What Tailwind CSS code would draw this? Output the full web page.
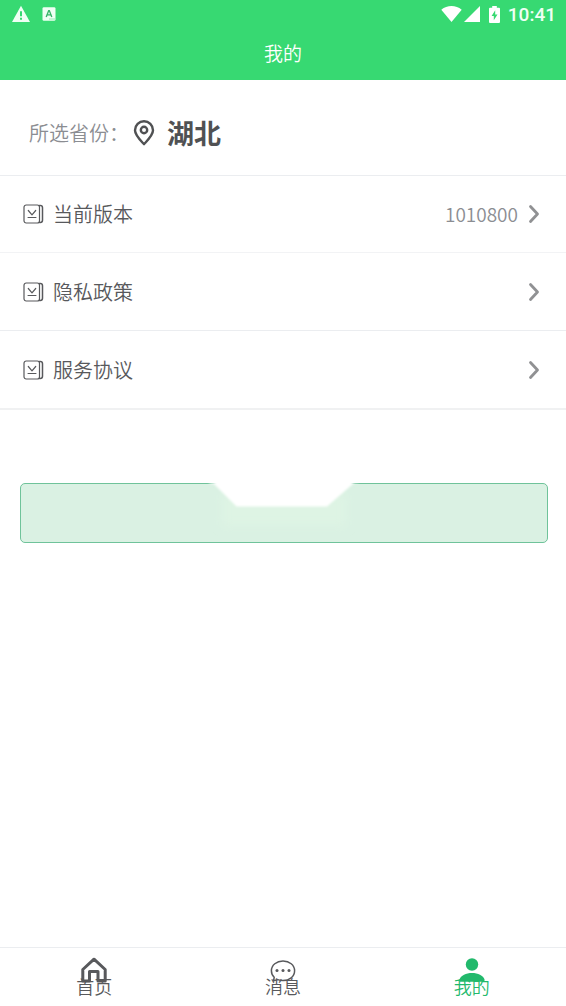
<!DOCTYPE html>
<html lang="zh-CN">
<head>
<meta charset="utf-8">
<meta name="viewport" content="width=device-width, initial-scale=1">
<title>我的</title>
<script src="https://cdn.jsdelivr.net/npm/@tailwindcss/browser@4"></script>
</head>
<body class="flex min-h-screen flex-col bg-white font-['Noto_Sans_CJK_SC',sans-serif] font-[350] text-[#58595c]">
<svg class="hidden" aria-hidden="true">
  <symbol id="book" viewBox="0 0 22 22">
    <g fill="none" stroke="currentColor" stroke-linecap="round" stroke-linejoin="round">
      <rect x="2" y="2" width="15.5" height="18" rx="2.2" stroke-width="1.2"/>
      <path d="M17.5 2.6h.8a2.2 2.2 0 0 1 2.2 2.2v12.4a2.2 2.2 0 0 1-2.2 2.2h-.8" stroke-width="1.5"/>
      <path d="M6.300 7.500 10 11.800l3.700-4.300" stroke-width="1.2"/>
      <path d="M6 14.500h8" stroke-width="1"/>
    </g>
  </symbol>
  <symbol id="chevron" viewBox="0 0 12 20">
    <path d="M2.500 2.500 9.500 10l-7 7.500" fill="none" stroke="currentColor" stroke-width="2.800" stroke-linecap="round" stroke-linejoin="round"/>
  </symbol>
</svg>

<header class="bg-[#37d972] text-white">
  <div class="flex h-7 items-center justify-between pr-2.5 pl-3">
    <div class="flex items-center gap-3">
      <svg class="h-[18px] w-[18px]" viewBox="0 0 18 18" aria-hidden="true">
        <path d="M9 .8 18 17H0z" fill="#effff4"/>
        <path d="M8 6.2h2v5H8zM8 12.8h2v2H8z" fill="#37d972"/>
      </svg>
      <svg class="h-[14px] w-[14px]" viewBox="0 0 14 14" aria-hidden="true">
        <rect x=".5" y=".2" width="13" height="13.6" rx="1.4" fill="#effff4"/>
        <path d="m4.200 10 2.500-6.400h.6L9.800 10M5.100 7.900h3.800" fill="none" stroke="#37b568" stroke-width="1.4"/>
        <path d="M7.500 12h1M9.500 12h1M11.500 12h1" stroke="#37d972"/>
      </svg>
    </div>
    <div class="flex items-center">
      <svg class="h-4 w-[21px]" viewBox="0 0 21 16" aria-hidden="true"><path d="M.3 3.800C6.100-1.200 14.900-1.200 20.700 3.800L10.500 16z" fill="#fff"/></svg>
      <svg class="ml-0.5 h-4 w-4" viewBox="0 0 16 16" aria-hidden="true"><path d="M16 0v16H0z" fill="#fff"/></svg>
      <svg class="ml-[9px] h-[17px] w-[11px]" viewBox="0 0 11 17" aria-hidden="true">
        <path d="M3.200 0h4.600v1.800H10a1 1 0 0 1 1 1V16a1 1 0 0 1-1 1H1a1 1 0 0 1-1-1V2.800a1 1 0 0 1 1-1h2.200z" fill="#fff"/>
        <path d="M6.200 4.300 2.600 10h2.200v4.300l3.700-5.900H6.200z" fill="#37d972"/>
      </svg>
      <time class="ml-2 pt-0.5 font-[Roboto,sans-serif] text-[19px] leading-6 font-medium text-[#effff4]">10:41</time>
    </div>
  </div>
  <h1 class="h-[52px] text-center text-[19px] leading-[50px] font-[350]">我的</h1>
</header>

<main class="flex-1">
  <section class="flex h-24 items-center border-b border-[#ebedf0] pt-2.5 pl-[29px]">
    <span class="text-xl text-[#8b8d92]">所选省份：</span>
    <button type="button" class="ml-1 flex items-center gap-3 text-[27px] leading-9 font-bold text-[#505153]">
      <svg class="h-[26px] w-[22px]" viewBox="0 0 22 26" fill="none" stroke="currentColor" stroke-width="2.400" aria-hidden="true">
        <path d="M11 24.200C7.800 20.700 2 15.300 2 10.300a9 9 0 0 1 18 0c0 5-5.800 10.400-9 13.900z" stroke-linejoin="round"/>
        <circle cx="11" cy="10" r="3.200"/>
      </svg>
      湖北
    </button>
  </section>
  <ul class="text-xl">
    <li><a href="#version" class="flex h-[77px] items-center border-b border-[#f2f3f5] pr-[26px] pl-[22px]">
      <svg class="h-[22px] w-[22px]" aria-hidden="true"><use href="#book"/></svg>
      <span class="ml-[9px]">当前版本</span>
      <span class="ml-auto text-[19px] text-[#8b8d92]">1010800</span>
      <svg class="ml-2.5 h-5 w-3 text-[#909193]" aria-hidden="true"><use href="#chevron"/></svg>
    </a></li>
    <li><a href="#privacy" class="flex h-[78px] items-center border-b border-[#ebedf0] pr-[26px] pl-[22px]">
      <svg class="h-[22px] w-[22px]" aria-hidden="true"><use href="#book"/></svg>
      <span class="ml-[9px]">隐私政策</span>
      <svg class="ml-auto h-5 w-3 text-[#909193]" aria-hidden="true"><use href="#chevron"/></svg>
    </a></li>
    <li class="border-b border-[#f0f1f2]"><a href="#terms" class="flex h-[78px] items-center border-b border-[#f0f1f2] pr-[26px] pl-[22px]">
      <svg class="h-[22px] w-[22px]" aria-hidden="true"><use href="#book"/></svg>
      <span class="ml-[9px]">服务协议</span>
      <svg class="ml-auto h-5 w-3 text-[#909193]" aria-hidden="true"><use href="#chevron"/></svg>
    </a></li>
  </ul>
  <div class="mt-[73px] mr-[18px] ml-5">
    <button type="button" aria-label="操作" class="relative block h-[60px] w-full rounded-[5px] border border-[#6fc39a] bg-[#daf1e3]">
      <svg class="absolute -top-1 left-1/2 h-[60px] w-[156px] -translate-x-1/2" viewBox="0 0 156 60" aria-hidden="true">
        <defs>
          <filter id="soft" x="-20%" y="-30%" width="140%" height="160%"><feGaussianBlur stdDeviation="5"/></filter>
          <filter id="edge" x="-10%" y="-20%" width="120%" height="140%"><feGaussianBlur stdDeviation=".8"/></filter>
        </defs>
        <path d="M16 14h124v32H16z" fill="#def4e4" filter="url(#soft)"/>
        <path d="M3 0h150v2l-5 1-27 23.500H30.500L8 4 3 3z" fill="#fff" filter="url(#edge)"/>
      </svg>
    </button>
  </div>
</main>

<nav class="grid h-[59px] grid-cols-3 border-t border-[#ebedf0] text-[18px] leading-6">
  <a href="#home" class="flex flex-col items-center pt-2">
    <svg class="h-7 w-7" viewBox="0 0 28 28" fill="none" stroke="currentColor" stroke-width="3" stroke-linejoin="round" aria-hidden="true">
      <path d="M14 3.200 2.800 13.500V25h6.700v-9.500h8.500V25h7.200V13.500z"/>
    </svg>
    <span class="-mt-2.5">首页</span>
  </a>
  <a href="#messages" class="flex flex-col items-center pt-2">
    <svg class="h-7 w-7" viewBox="0 0 28 28" aria-hidden="true">
      <path d="M5.200 21.300C3.200 19.500 2.400 17.300 2.400 14.800 2.400 9 7.600 5 14 5s11.600 4 11.600 9.800S20.400 24.600 14 24.600c-2 0-3.500-.3-5.200-1l-4.300 1.200z" fill="none" stroke="currentColor" stroke-width="1.500" stroke-linejoin="round"/>
      <g fill="currentColor"><circle cx="8" cy="14.500" r="1.500"/><circle cx="14" cy="14.500" r="1.500"/><circle cx="20" cy="14.500" r="1.500"/></g>
    </svg>
    <span class="-mt-2.5">消息</span>
  </a>
  <a href="#me" aria-current="page" class="flex flex-col items-center pt-2 text-[#22b96c]">
    <svg class="h-7 w-7" viewBox="0 0 28 28" fill="currentColor" aria-hidden="true">
      <circle cx="14" cy="8.500" r="6.200"/>
      <path d="M1.500 25.800v-2.300C2.800 19.500 8 17 14 17s11.200 2.500 12.500 6.500v2.300z"/>
    </svg>
    <span class="-mt-2.5">我的</span>
  </a>
</nav>
</body>
</html>
